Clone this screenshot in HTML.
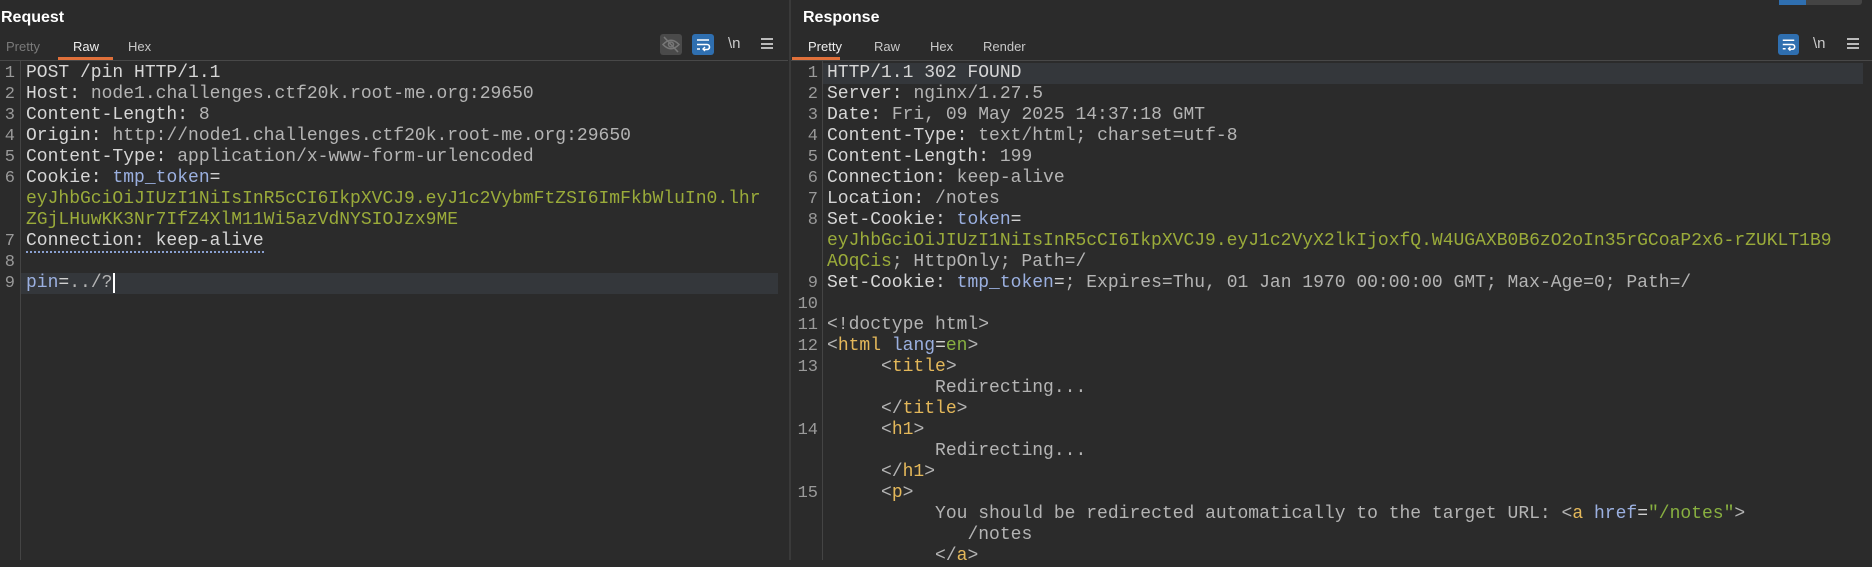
<!DOCTYPE html>
<html><head><meta charset="utf-8"><style>
*{margin:0;padding:0;box-sizing:border-box}
body{width:1872px;height:560px;background:#2b2b2b;overflow:hidden;position:relative;font-family:"Liberation Sans",sans-serif;color:#ddd}
.abs{position:absolute}
.h{font-weight:bold;font-size:16px;color:#fff;top:9px}
.tab{font-size:13px;color:#c8c8c8;top:39px}
.ul{height:3px;background:#e0703a;top:57px}
.sep{height:1px;background:#484848;top:60px}
.code{font-family:"Liberation Mono",monospace;font-size:18px;line-height:21px;white-space:pre;color:#d0d0d0}
.ln{font-family:"Liberation Mono",monospace;font-size:17px;line-height:21px;color:#9a9a9a;text-align:right;white-space:pre}
.k{color:#d6d6d6}.v{color:#b4b4b4}.g{color:#9aab3a}.b{color:#9bb0e0}.t{color:#e4b85a}.y{color:#88b040}
</style></head><body>
<!-- Request panel -->
<div class="abs h" style="left:1px">Request</div>
<div class="abs tab" style="left:6px;color:#7a7a7a">Pretty</div>
<div class="abs tab" style="left:73px;color:#eee">Raw</div>
<div class="abs tab" style="left:128px">Hex</div>
<div class="abs ul" style="left:58px;width:55px"></div>
<div class="abs sep" style="left:0;width:788px"></div>
<div class="abs" style="left:660px;top:34px;width:22px;height:21px;background:#4a4a4a;border-radius:3px"><svg width="22" height="21" viewBox="0 0 22 21"><path d="M3 10.5 Q11 2 19 10.5 Q11 19 3 10.5Z" fill="none" stroke="#777" stroke-width="1.6"/><circle cx="11" cy="10.5" r="2.5" fill="none" stroke="#777" stroke-width="1.5"/><line x1="4" y1="3" x2="18" y2="18" stroke="#777" stroke-width="1.6"/></svg></div>
<div class="abs" style="left:692px;top:34px;width:22px;height:21px;background:#2f6fb0;border-radius:3px"><svg width="22" height="21" viewBox="0 0 22 21"><path d="M5 6h12M5 10.5h10a2.5 2.5 0 0 1 0 5h-3M5 15h3" fill="none" stroke="#fff" stroke-width="1.6"/><path d="M13 13l-2 2 2 2" fill="none" stroke="#fff" stroke-width="1.4"/></svg></div>
<div class="abs" style="left:728px;top:35px;font-size:15px;color:#ccc">\n</div>
<div class="abs" style="left:761px;top:38px;width:12px;height:11px;border-top:2px solid #bbb;border-bottom:2px solid #bbb"><div style="margin-top:2.5px;height:2px;background:#bbb"></div></div>
<div class="abs" style="left:20px;top:61px;width:1px;height:499px;background:#444"></div>
<div class="abs" style="left:21px;top:273px;width:757px;height:21px;background:#34373b"></div>
<div class="abs ln" style="left:0;top:63px;width:15px">1
2
3
4
5
6


7
8
9</div>
<div class="abs code" style="left:26px;top:63px"><span class="k">POST /pin HTTP/1.1</span>
<span class="k">Host:</span> <span class="v">node1.challenges.ctf20k.root-me.org:29650</span>
<span class="k">Content-Length:</span> <span class="v">8</span>
<span class="k">Origin:</span> <span class="v">http://node1.challenges.ctf20k.root-me.org:29650</span>
<span class="k">Content-Type:</span> <span class="v">application/x-www-form-urlencoded</span>
<span class="k">Cookie:</span> <span class="b">tmp_token</span>=
<span class="g">eyJhbGciOiJIUzI1NiIsInR5cCI6IkpXVCJ9.eyJ1c2VybmFtZSI6ImFkbWluIn0.lhr</span>
<span class="g">ZGjLHuwKK3Nr7IfZ4XlM11Wi5azVdNYSIOJzx9ME</span>
<span class="k" style="border-bottom:2px dotted #8aa0d0">Connection: keep-alive</span>

<span class="b">pin</span>=<span class="v">../?</span><span style="border-left:2px solid #fff;margin-left:1px"></span></div>
<!-- divider -->
<div class="abs" style="left:789px;top:0;width:2px;height:560px;background:#3a3a3a"></div>
<!-- Response panel -->
<div class="abs" style="left:1779px;top:0;width:83px;height:5px;background:#444;border-radius:0 0 3px 3px"></div>
<div class="abs" style="left:1779px;top:0;width:27px;height:5px;background:#2f6fb0"></div>
<div class="abs h" style="left:803px">Response</div>
<div class="abs tab" style="left:808px;color:#eee">Pretty</div>
<div class="abs tab" style="left:874px">Raw</div>
<div class="abs tab" style="left:930px">Hex</div>
<div class="abs tab" style="left:983px">Render</div>
<div class="abs ul" style="left:792px;width:48px"></div>
<div class="abs sep" style="left:791px;width:1081px"></div>
<div class="abs" style="left:1778px;top:34px;width:21px;height:21px;background:#2f6fb0;border-radius:3px"><svg width="21" height="21" viewBox="0 0 22 21"><path d="M5 6h12M5 10.5h10a2.5 2.5 0 0 1 0 5h-3M5 15h3" fill="none" stroke="#fff" stroke-width="1.6"/><path d="M13 13l-2 2 2 2" fill="none" stroke="#fff" stroke-width="1.4"/></svg></div>
<div class="abs" style="left:1813px;top:35px;font-size:15px;color:#ccc">\n</div>
<div class="abs" style="left:1847px;top:38px;width:12px;height:11px;border-top:2px solid #bbb;border-bottom:2px solid #bbb"><div style="margin-top:2.5px;height:2px;background:#bbb"></div></div>
<div class="abs" style="left:822px;top:61px;width:1px;height:499px;background:#444"></div>
<div class="abs" style="left:823px;top:63px;width:1040px;height:21px;background:#34373b"></div>
<div class="abs ln" style="left:792px;top:63px;width:26px">1
2
3
4
5
6
7
8


9
10
11
12
13


14


15</div>
<div class="abs code" style="left:827px;top:63px"><span class="k">HTTP/1.1 302 FOUND</span>
<span class="k">Server:</span> <span class="v">nginx/1.27.5</span>
<span class="k">Date:</span> <span class="v">Fri, 09 May 2025 14:37:18 GMT</span>
<span class="k">Content-Type:</span> <span class="v">text/html; charset=utf-8</span>
<span class="k">Content-Length:</span> <span class="v">199</span>
<span class="k">Connection:</span> <span class="v">keep-alive</span>
<span class="k">Location:</span> <span class="v">/notes</span>
<span class="k">Set-Cookie:</span> <span class="b">token</span>=
<span class="g">eyJhbGciOiJIUzI1NiIsInR5cCI6IkpXVCJ9.eyJ1c2VyX2lkIjoxfQ.W4UGAXB0B6zO2oIn35rGCoaP2x6-rZUKLT1B9</span>
<span class="g">AOqCis</span><span class="v">; HttpOnly; Path=/</span>
<span class="k">Set-Cookie:</span> <span class="b">tmp_token</span>=<span class="v">; Expires=Thu, 01 Jan 1970 00:00:00 GMT; Max-Age=0; Path=/</span>

<span class="v">&lt;!doctype html&gt;</span>
<span class="v">&lt;</span><span class="t">html</span> <span class="b">lang</span>=<span class="y">en</span><span class="v">&gt;</span>
     <span class="v">&lt;</span><span class="t">title</span><span class="v">&gt;</span>
          <span class="v">Redirecting...</span>
     <span class="v">&lt;/</span><span class="t">title</span><span class="v">&gt;</span>
     <span class="v">&lt;</span><span class="t">h1</span><span class="v">&gt;</span>
          <span class="v">Redirecting...</span>
     <span class="v">&lt;/</span><span class="t">h1</span><span class="v">&gt;</span>
     <span class="v">&lt;</span><span class="t">p</span><span class="v">&gt;</span>
          <span class="v">You should be redirected automatically to the target URL: &lt;</span><span class="t">a</span> <span class="b">href</span>=<span class="y">"/notes"</span><span class="v">&gt;</span>
             <span class="v">/notes</span>
          <span class="v">&lt;/</span><span class="t">a</span><span class="v">&gt;</span></div>
</body></html>
